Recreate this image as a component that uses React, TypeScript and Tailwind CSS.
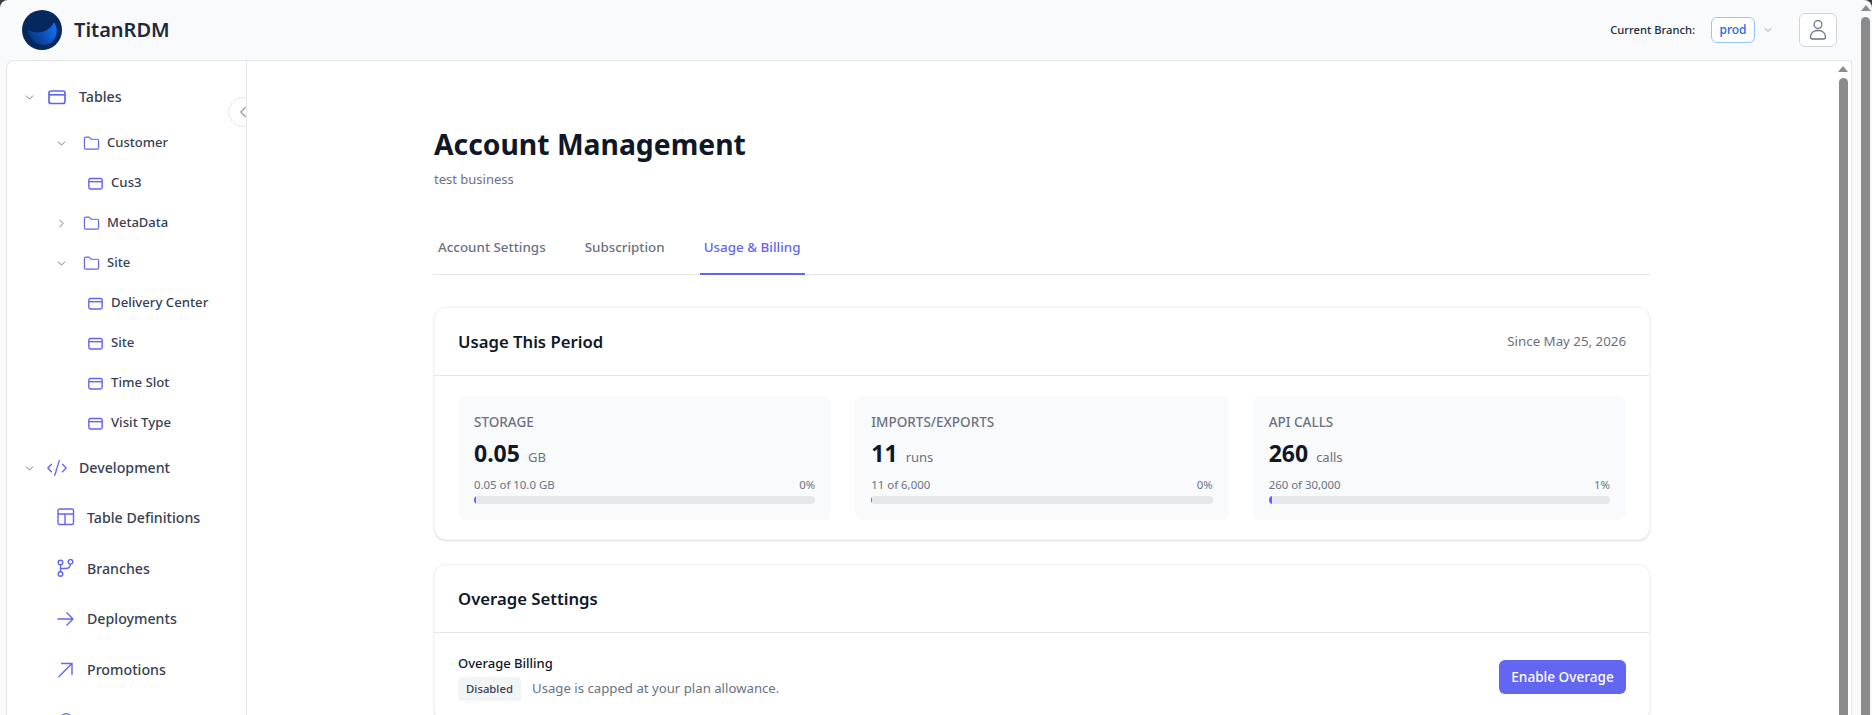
import { ChevronDown, ChevronLeft, ChevronRight, CodeXml, Folder, Layers } from "lucide-react";

const TableIcon = ({ size }: { size: number }) => (
  <svg width={size} height={size} viewBox="0 0 18 18" fill="none" stroke="#6366f1" strokeWidth="1.7" className="shrink-0">
    <rect x="1" y="3" width="16" height="12.5" rx="2" />
    <path d="M1 6.800h16" />
  </svg>
);

const Logo = () => (
  <svg width="40" height="40" viewBox="0 0 40 40" className="shrink-0">
    <defs>
      <linearGradient id="crescent" x1="0" y1="1" x2="1" y2="0.4">
        <stop offset="0" stopColor="#062a63" />
        <stop offset="1" stopColor="#0f6df2" />
      </linearGradient>
    </defs>
    <circle cx="20" cy="20" r="20" fill="#05295f" />
    <path d="M5.500 20C14 24.500 26 23.500 32 12.500C35.500 16 36.500 26 30 32C22 38.500 9 34 5.500 20Z" fill="url(#crescent)" />
  </svg>
);

const GridIcon = () => (
  <svg width="18" height="18" viewBox="0 0 18 18" fill="none" stroke="#6366f1" strokeWidth="1.400">
    <rect x="1" y="1" width="15.500" height="15.500" rx="1.500" />
    <path d="M1 6h15.500M8 6v10.500" />
  </svg>
);

const BranchIcon = () => (
  <svg width="18" height="18" viewBox="0 0 18 18" fill="none" stroke="#6366f1" strokeWidth="1.400">
    <circle cx="3.500" cy="3.500" r="2.300" />
    <circle cx="13.500" cy="2.800" r="2.300" />
    <circle cx="3.500" cy="15" r="2.300" />
    <path d="M3.500 5.800v6.900M13.500 5.100c0 3-2 4.400-5 4.400h-5" />
  </svg>
);

const DeployIcon = () => (
  <svg width="18" height="18" viewBox="0 0 18 18" fill="none" stroke="#6366f1" strokeWidth="1.400">
    <path d="M0.500 9h15.500M9.500 2.500L16 9l-6.500 6.500" />
  </svg>
);

const PromoteIcon = () => (
  <svg width="18" height="18" viewBox="0 0 18 18" fill="none" stroke="#6366f1" strokeWidth="1.400">
    <path d="M1.500 16L15 2.500M4 2.500h11V14" />
  </svg>
);

const UserIcon = () => (
  <svg width="18" height="22" viewBox="0 0 18 22" fill="none" stroke="#6b7280" strokeWidth="1.300">
    <circle cx="9" cy="5.500" r="3.900" />
    <path d="M1.500 18c0-4 3.200-6.500 7.500-6.500s7.500 2.500 7.500 6.500c0 1.300-1 2-2.200 2H3.700c-1.200 0-2.200-.7-2.200-2Z" />
  </svg>
);

const Caret = ({ open }: { open: boolean }) => (
  <span className="flex w-[14px] justify-center text-gray-500">
    {open ? <ChevronDown size={13} strokeWidth={1.75} /> : <ChevronRight size={13} strokeWidth={1.75} />}
  </span>
);

const FolderRow = ({ label, open }: { label: string; open: boolean }) => (
  <div className="flex h-10 items-center pl-[47px]">
    <Caret open={open} />
    <span className="ml-[16px] flex w-[14px] justify-center">
      <Folder size={17} color="#6366f1" strokeWidth={1.75} className="shrink-0" />
    </span>
    <span className="ml-[9px] text-[13px] font-medium text-gray-700">{label}</span>
  </div>
);

const TableRow = ({ label }: { label: string }) => (
  <div className="flex h-10 items-center gap-[8px] pl-[81px]">
    <TableIcon size={15} />
    <span className="text-[13.2px] font-medium text-gray-700">{label}</span>
  </div>
);

const NavRow = ({ label, icon }: { label: string; icon: React.ReactNode }) => (
  <div className="flex h-[50.8px] items-center pl-[50px]">
    <span className="flex w-[18px]">{icon}</span>
    <span className="ml-3 text-[14.2px] font-medium text-gray-700">{label}</span>
  </div>
);

const Sidebar = () => (
  <aside className="relative w-[241px] shrink-0 rounded-tl-lg border-t border-r border-l border-[#e5e7eb] bg-white pt-[16px]">
    <div className="flex h-10 items-center pl-[15px]">
      <Caret open />
      <span className="ml-[11px] flex w-[20px] justify-center">
        <TableIcon size={18} />
      </span>
      <span className="ml-[12px] text-[14.2px] font-medium text-gray-700">Tables</span>
    </div>
    <div className="mt-[6px]">
      <FolderRow label="Customer" open />
      <TableRow label="Cus3" />
      <FolderRow label="MetaData" open={false} />
      <FolderRow label="Site" open />
      <TableRow label="Delivery Center" />
      <TableRow label="Site" />
      <TableRow label="Time Slot" />
      <TableRow label="Visit Type" />
    </div>
    <div className="mt-[5px] flex h-10 items-center pl-[15px]">
      <Caret open />
      <span className="ml-[11px] flex w-[20px] justify-center">
        <CodeXml size={22} color="#6366f1" strokeWidth={1.5} className="shrink-0" />
      </span>
      <span className="ml-[12px] text-[14.2px] font-medium text-gray-700">Development</span>
    </div>
    <div className="pt-[4px]">
      <NavRow label="Table Definitions" icon={<GridIcon />} />
      <NavRow label="Branches" icon={<BranchIcon />} />
      <NavRow label="Deployments" icon={<DeployIcon />} />
      <NavRow label="Promotions" icon={<PromoteIcon />} />
      <NavRow label="Lineage" icon={<Layers size={18} color="#6366f1" strokeWidth={1.5} />} />
    </div>
    <div className="absolute top-[36px] right-0 h-[30px] w-[18px] overflow-hidden">
      <div className="flex h-[30px] w-[30px] items-center rounded-full border border-[#e5e7eb] bg-white pl-[5px]">
        <ChevronLeft size={18} color="#9ca3af" strokeWidth={2} className="shrink-0" />
      </div>
    </div>
  </aside>
);

const UsageCard = ({ label, value, unit, detail, pct, fill }: { label: string; value: string; unit: string; detail: string; pct: string; fill: number }) => (
  <div className="rounded-lg bg-[#f9fafb] p-4">
    <div className="text-[13.5px] leading-5 font-medium text-gray-500 uppercase">{label}</div>
    <div className="mt-[5px] flex h-8 items-baseline">
      <span className="text-[23px] leading-8 font-bold text-gray-900">{value}</span>
      <span className="ml-2 text-[13px] text-gray-500">{unit}</span>
    </div>
    <div className="mt-2 flex justify-between text-[11.4px] leading-4 text-gray-500">
      <span>{detail}</span>
      <span>{pct}</span>
    </div>
    <div className="mt-[3px] h-2 overflow-hidden rounded-full bg-[#e5e7eb]">
      <div className="h-2 bg-[#6366f1]" style={{ width: fill }} />
    </div>
  </div>
);

const Scrollbar = ({ className }: { className: string }) => (
  <div className={`flex shrink-0 flex-col items-center ${className}`}>
    <div className="mt-[5px] h-0 w-0 border-x-[5px] border-b-[6px] border-x-transparent border-b-[#8b8b8b]" />
    <div className="mt-[6px] w-[9px] flex-1 rounded-t-full bg-[#8b8b8b]" />
  </div>
);

const Main = () => (
  <main className="flex min-w-0 flex-1 border-t border-r border-[#e5e7eb] bg-white">
    <div className="min-w-0 flex-1 overflow-hidden">
      <div className="mx-auto w-[1216px] pt-[65px]">
        <h1 className="text-[28.3px] leading-9 font-bold text-gray-900">Account Management</h1>
        <p className="mt-[7px] text-[13px] leading-5 text-gray-500">test business</p>
        <div className="mt-[33px] flex gap-[31px] border-b border-[#e5e7eb]">
          <div className="-mb-px border-b-2 border-transparent px-1 pt-[15px] pb-4 text-[13.4px] leading-5 font-medium text-gray-500">Account Settings</div>
          <div className="-mb-px border-b-2 border-transparent px-1 pt-[15px] pb-4 text-[13.4px] leading-5 font-medium text-gray-500">Subscription</div>
          <div className="-mb-px border-b-2 border-[#6366f1] px-1 pt-[15px] pb-4 text-[13.4px] leading-5 font-medium text-[#6366f1]">Usage &amp; Billing</div>
        </div>
        <section className="mt-8 rounded-xl border border-[#f3f4f6] bg-white shadow-sm">
          <div className="flex h-[68px] items-center justify-between border-b border-[#e5e7eb] px-[23px]">
            <h2 className="text-[16.7px] font-semibold text-gray-900">Usage This Period</h2>
            <span className="text-[13.3px] text-gray-500">Since May 25, 2026</span>
          </div>
          <div className="grid grid-cols-3 gap-6 px-[23px] pt-5 pb-[19px]">
            <UsageCard label="Storage" value="0.05" unit="GB" detail="0.05 of 10.0 GB" pct="0%" fill={2} />
            <UsageCard label="Imports/Exports" value="11" unit="runs" detail="11 of 6,000" pct="0%" fill={1} />
            <UsageCard label="API Calls" value="260" unit="calls" detail="260 of 30,000" pct="1%" fill={3} />
          </div>
        </section>
        <section className="mt-6 rounded-xl border border-[#f3f4f6] bg-white shadow-sm">
          <div className="flex h-[68px] items-center border-b border-[#e5e7eb] px-[23px]">
            <h2 className="text-[16.7px] font-semibold text-gray-900">Overage Settings</h2>
          </div>
          <div className="flex items-center justify-between px-[23px] py-5">
            <div>
              <div className="text-[13px] leading-5 font-medium text-gray-900">Overage Billing</div>
              <div className="mt-1 flex items-center gap-[11px]">
                <span className="flex h-6 w-[63px] items-center justify-center rounded bg-[#f3f4f6] text-[11.3px] font-medium text-gray-700">Disabled</span>
                <span className="text-[13.2px] text-gray-500">Usage is capped at your plan allowance.</span>
              </div>
            </div>
            <button className="h-[34px] w-[127px] rounded-md bg-[#6366f1] text-[13.6px] font-medium text-white">Enable Overage</button>
          </div>
        </section>
      </div>
    </div>
    <Scrollbar className="w-[14px] pr-[2px]" />
  </main>
);

const App = () => (
  <div className="h-[715px] w-[1872px] overflow-hidden bg-[#3c3c3c] font-['Noto_Sans',sans-serif]">
    <div className="flex h-[715px] rounded-t-lg bg-[#f9fafc]">
      <div className="flex min-w-0 flex-1 flex-col">
        <header className="flex h-[60px] shrink-0 items-center justify-between pr-[15px] pl-[22px]">
          <div className="flex items-center gap-3">
            <Logo />
            <span className="text-xl font-semibold text-gray-800">TitanRDM</span>
          </div>
          <div className="flex items-center">
            <span className="text-[11.2px] font-medium text-gray-800">Current Branch:</span>
            <span className="ml-[16px] flex h-[26px] w-[44px] items-center justify-center rounded-md border border-[#93c5fd] bg-white text-xs font-medium text-[#2563eb]">prod</span>
            <ChevronDown size={12} color="#9ca3af" className="ml-[7px]" />
            <span className="ml-[25px] flex h-[34px] w-[38px] items-center justify-center rounded-md border border-[#d1d5db] bg-white">
              <UserIcon />
            </span>
          </div>
        </header>
        <div className="flex min-h-0 flex-1 pl-[6px]">
          <Sidebar />
          <Main />
        </div>
      </div>
      <Scrollbar className="w-[20px] pr-[1px] pl-[8px]" />
    </div>
  </div>
);

export default App;
